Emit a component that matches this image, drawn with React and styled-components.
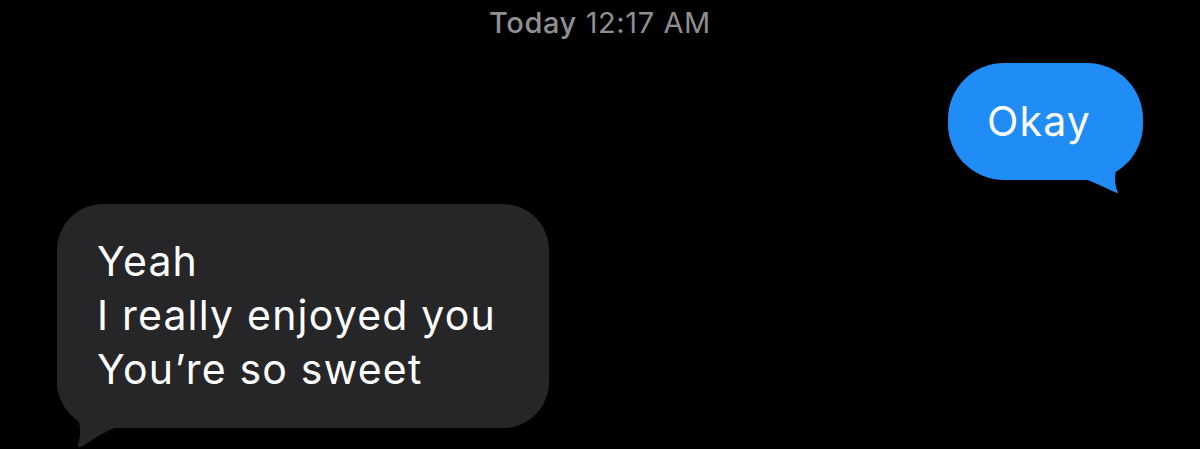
import React from "react";
import styled, { createGlobalStyle } from "styled-components";

const Global = createGlobalStyle`
  html, body { margin: 0; padding: 0; background: #000; }
  body { font-family: Inter, "Noto Sans", sans-serif; -webkit-font-smoothing: antialiased; }
`;

const Screen = styled.div`
  width: 1200px;
  height: 449px;
  background: #000;
  display: flex;
  flex-direction: column;
  overflow: hidden;
`;

const Stamp = styled.div`
  text-align: center;
  color: #8e8e93;
  font-size: 29px;
  line-height: 34px;
  margin-top: 6px;
  letter-spacing: 0.6px;
  b { font-weight: 500; }
  span { font-weight: 400; }
`;

const Row = styled.div`
  display: flex;
  justify-content: ${(p) => (p.$out ? "flex-end" : "flex-start")};
  padding: 0 57px;
  margin-top: ${(p) => p.$top}px;
`;

const Bubble = styled.div`
  position: relative;
  background: ${(p) => (p.$out ? "#208cf6" : "#262628")};
  color: #fff;
  font-size: 41px;
  letter-spacing: 1.2px;
  border-radius: ${(p) => (p.$out ? "56px" : "46px")};
  padding: ${(p) => p.$pad};
  line-height: 54px;
`;

const Tail = styled.svg`
  position: absolute;
  bottom: ${(p) => p.$bottom}px;
  ${(p) => (p.$out ? "right: 0;" : "left: 0;")}
  width: 52px;
  height: ${(p) => p.$h}px;
  overflow: visible;
`;

function OutTail() {
  return (
    <Tail $out $bottom={-13} $h={56} viewBox="0 0 52 56">
      <path
        d="M0 30 L50 0 C47 8 40 18 30 25 C24 30 23 40 25 50 C26 54 28 56 26 56 C18 53 8 47 -6 42 Z"
        fill="#208cf6"
      />
    </Tail>
  );
}

function InTail() {
  return (
    <Tail $bottom={-20} $h={60} viewBox="0 0 52 60">
      <path
        d="M40 30 L0 0 C3 12 12 26 22 34 C24 42 23 50 21 56 C20 59 23 60 26 58 C34 53 42 46 58 40 Z"
        fill="#262628"
      />
    </Tail>
  );
}

const Line = styled.div``;

export default function App() {
  return (
    <Screen>
      <Global />
      <Stamp>
        <b>Today</b> <span>12:17 AM</span>
      </Stamp>
      <Row $out $top={23}>
        <Bubble $out $pad="31px 52px 32px 39px">
          Okay
          <OutTail />
        </Bubble>
      </Row>
      <Row $top={24}>
        <Bubble $pad="30px 53px 32px 40px">
          <Line>Yeah</Line>
          <Line>I really enjoyed you</Line>
          <Line>You’re so sweet</Line>
          <InTail />
        </Bubble>
      </Row>
    </Screen>
  );
}
